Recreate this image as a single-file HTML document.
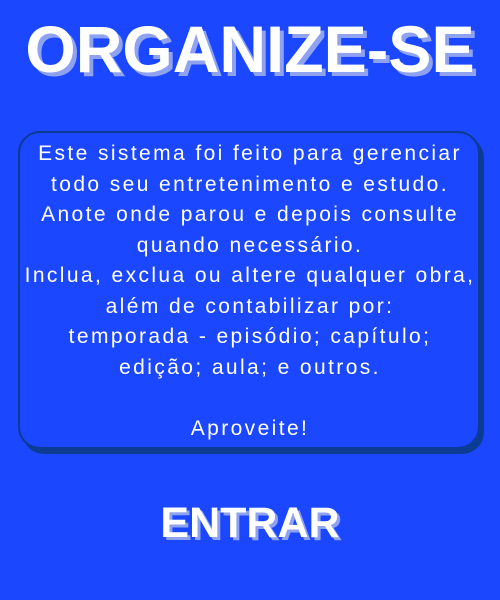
<!DOCTYPE html>
<html><head><style>
html,body{margin:0;padding:0}
body{width:500px;height:600px;background:#1a47ff;position:relative;overflow:hidden;font-family:"Liberation Sans",sans-serif;color:#fff}
.title{position:absolute;left:0;width:500px;top:11px;text-align:center;font-weight:bold;font-size:66px;line-height:76px;text-shadow:4px 4px 0 #8ea2f0;transform:scaleX(0.98)}
.box{position:absolute;left:18px;top:131px;width:462px;height:318px;border:2px solid #0b3c92;border-radius:22px;box-shadow:4px 5px 0 #0b3c92;box-sizing:border-box}
.text{position:absolute;left:18px;width:464px;top:139px;text-align:center;font-size:21px;line-height:30.5px;letter-spacing:2.4px}
.btn{position:absolute;left:0;width:500px;top:499px;text-align:center;font-weight:bold;font-size:43px;line-height:48px;text-shadow:3px 3px 0 #8ea2f0}
</style></head><body>
<div class="title">ORGANIZE-SE</div>
<div class="box"></div>
<div class="text">Este sistema foi feito para gerenciar<br>todo seu entretenimento e estudo.<br>Anote onde parou e depois consulte<br>quando necessário.<br>Inclua, exclua ou altere qualquer obra,<br>além de contabilizar por:<br>temporada - episódio; capítulo;<br>edição; aula; e outros.<br><br>Aproveite!</div>
<div class="btn">ENTRAR</div>
</body></html>
